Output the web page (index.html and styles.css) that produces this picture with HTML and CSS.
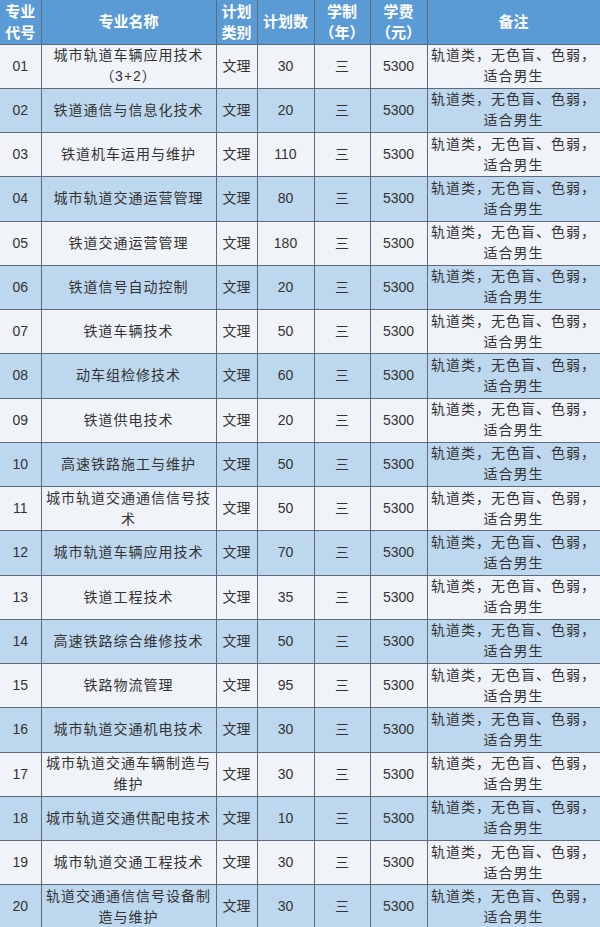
FILE: index.html
```
<!DOCTYPE html>
<html lang="zh">
<head>
<meta charset="utf-8">
<link rel="stylesheet" href="styles.css">
</head>
<body>
<table class="plan">
<colgroup>
<col class="c-code"><col class="c-name"><col class="c-type"><col class="c-num"><col class="c-year"><col class="c-fee"><col class="c-note">
</colgroup>
<thead>
<tr><th>专业<br>代号</th><th>专业名称</th><th>计划<br>类别</th><th>计划数</th><th>学制<br>（年）</th><th>学费<br>（元）</th><th>备注</th></tr>
</thead>
<tbody>
<tr><td>01</td><td class="name">城市轨道车辆应用技术<br>（3+2）</td><td>文理</td><td>30</td><td>三</td><td>5300</td><td class="note">轨道类，无色盲、色弱，<br>适合男生</td></tr>
<tr><td>02</td><td class="name">铁道通信与信息化技术</td><td>文理</td><td>20</td><td>三</td><td>5300</td><td class="note">轨道类，无色盲、色弱，<br>适合男生</td></tr>
<tr><td>03</td><td class="name">铁道机车运用与维护</td><td>文理</td><td>110</td><td>三</td><td>5300</td><td class="note">轨道类，无色盲、色弱，<br>适合男生</td></tr>
<tr><td>04</td><td class="name">城市轨道交通运营管理</td><td>文理</td><td>80</td><td>三</td><td>5300</td><td class="note">轨道类，无色盲、色弱，<br>适合男生</td></tr>
<tr><td>05</td><td class="name">铁道交通运营管理</td><td>文理</td><td>180</td><td>三</td><td>5300</td><td class="note">轨道类，无色盲、色弱，<br>适合男生</td></tr>
<tr><td>06</td><td class="name">铁道信号自动控制</td><td>文理</td><td>20</td><td>三</td><td>5300</td><td class="note">轨道类，无色盲、色弱，<br>适合男生</td></tr>
<tr><td>07</td><td class="name">铁道车辆技术</td><td>文理</td><td>50</td><td>三</td><td>5300</td><td class="note">轨道类，无色盲、色弱，<br>适合男生</td></tr>
<tr><td>08</td><td class="name">动车组检修技术</td><td>文理</td><td>60</td><td>三</td><td>5300</td><td class="note">轨道类，无色盲、色弱，<br>适合男生</td></tr>
<tr><td>09</td><td class="name">铁道供电技术</td><td>文理</td><td>20</td><td>三</td><td>5300</td><td class="note">轨道类，无色盲、色弱，<br>适合男生</td></tr>
<tr><td>10</td><td class="name">高速铁路施工与维护</td><td>文理</td><td>50</td><td>三</td><td>5300</td><td class="note">轨道类，无色盲、色弱，<br>适合男生</td></tr>
<tr><td>11</td><td class="name">城市轨道交通通信信号技<br>术</td><td>文理</td><td>50</td><td>三</td><td>5300</td><td class="note">轨道类，无色盲、色弱，<br>适合男生</td></tr>
<tr><td>12</td><td class="name">城市轨道车辆应用技术</td><td>文理</td><td>70</td><td>三</td><td>5300</td><td class="note">轨道类，无色盲、色弱，<br>适合男生</td></tr>
<tr><td>13</td><td class="name">铁道工程技术</td><td>文理</td><td>35</td><td>三</td><td>5300</td><td class="note">轨道类，无色盲、色弱，<br>适合男生</td></tr>
<tr><td>14</td><td class="name">高速铁路综合维修技术</td><td>文理</td><td>50</td><td>三</td><td>5300</td><td class="note">轨道类，无色盲、色弱，<br>适合男生</td></tr>
<tr><td>15</td><td class="name">铁路物流管理</td><td>文理</td><td>95</td><td>三</td><td>5300</td><td class="note">轨道类，无色盲、色弱，<br>适合男生</td></tr>
<tr><td>16</td><td class="name">城市轨道交通机电技术</td><td>文理</td><td>30</td><td>三</td><td>5300</td><td class="note">轨道类，无色盲、色弱，<br>适合男生</td></tr>
<tr><td>17</td><td class="name">城市轨道交通车辆制造与<br>维护</td><td>文理</td><td>30</td><td>三</td><td>5300</td><td class="note">轨道类，无色盲、色弱，<br>适合男生</td></tr>
<tr><td>18</td><td class="name">城市轨道交通供配电技术</td><td>文理</td><td>10</td><td>三</td><td>5300</td><td class="note">轨道类，无色盲、色弱，<br>适合男生</td></tr>
<tr><td>19</td><td class="name">城市轨道交通工程技术</td><td>文理</td><td>30</td><td>三</td><td>5300</td><td class="note">轨道类，无色盲、色弱，<br>适合男生</td></tr>
<tr><td>20</td><td class="name">轨道交通通信信号设备制<br>造与维护</td><td>文理</td><td>30</td><td>三</td><td>5300</td><td class="note">轨道类，无色盲、色弱，<br>适合男生</td></tr>
</tbody>
</table>
</body>
</html>
```
FILE: styles.css
```
html, body {
  margin: 0;
  padding: 0;
  background: #ffffff;
}
.plan {
  width: 600px;
  table-layout: fixed;
  border-collapse: collapse;
  font-family: "Liberation Sans", "Noto Sans CJK SC", sans-serif;
  font-size: 14px;
  color: #333333;
}
.c-code { width: 41px; }
.c-name { width: 175px; }
.c-type { width: 41px; }
.c-num { width: 57px; }
.c-year { width: 56px; }
.c-fee { width: 57px; }
.c-note { width: 173px; }
.plan th, .plan td {
  border: 1px solid #5f6b78;
  padding: 0;
  text-align: center;
  vertical-align: middle;
  line-height: 21px;
}
.plan tr > :first-child { border-left: none; }
.plan thead tr { height: 44px; }
.plan th {
  background: #5b9bd5;
  color: #ffffff;
  font-weight: bold;
  font-size: 15px;
  border-top: none;
}
.plan tbody tr { height: 44.25px; }
.plan tbody tr:nth-child(odd) td { background: #f0f3f8; }
.plan tbody tr:nth-child(even) td { background: #bdd7ee; }
.plan td.name, .plan td.note { letter-spacing: 1px; }
```
